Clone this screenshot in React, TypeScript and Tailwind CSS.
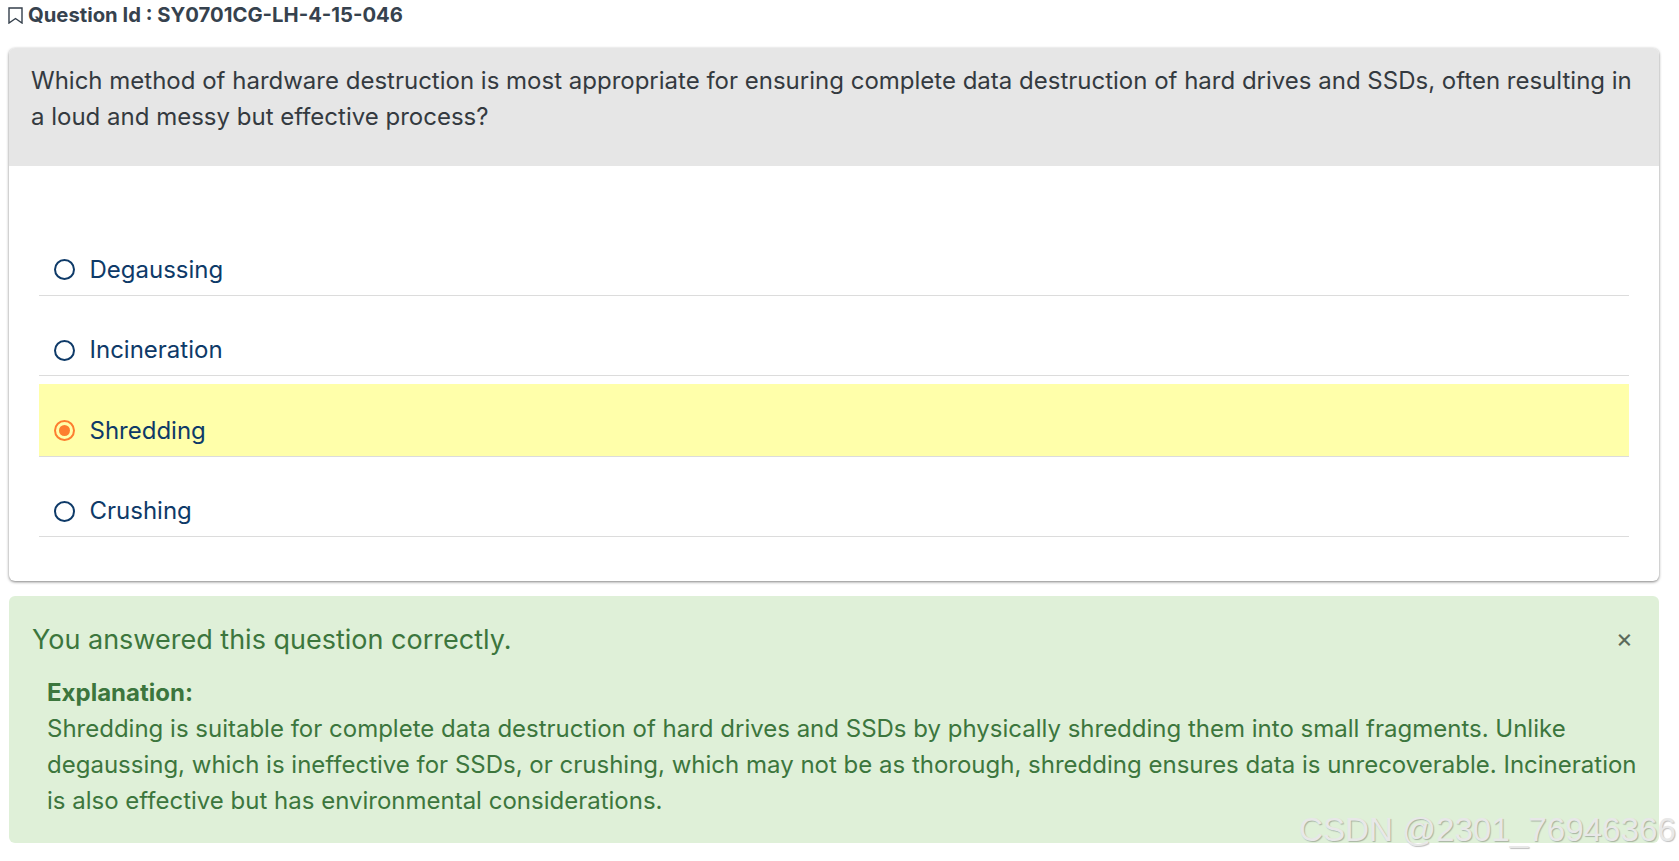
const options = [
  { label: "Degaussing", selected: false },
  { label: "Incineration", selected: false },
  { label: "Shredding", selected: true },
  { label: "Crushing", selected: false },
];

function Radio({ selected }: { selected: boolean }) {
  return (
    <span
      className={`flex h-[21px] w-[21px] shrink-0 items-center justify-center rounded-full border-2 ${
        selected ? "border-[#fd7e2f]" : "border-[#0e3a68]"
      }`}
    >
      {selected && <span className="h-[11px] w-[11px] rounded-full bg-[#fd7e2f]" />}
    </span>
  );
}

export default function App() {
  return (
    <div className="relative h-[861px] w-[1679px] overflow-hidden bg-white font-['Inter',sans-serif]">
      <div className="flex h-[30px] items-center pl-[8px] text-[20.25px] font-bold text-[#36424e]">
        <svg width="15" height="17" viewBox="0 0 15 17" fill="none" className="mr-[5px] mt-[1px]">
          <path d="M1 1h13v15l-6.5-4.5L1 16z" stroke="#343f4b" strokeWidth="1.4" strokeLinejoin="miter" />
        </svg>
        <span>Question Id : SY0701CG-LH-4-15-046</span>
      </div>

      <div className="ml-[9px] mt-[18px] w-[1650px] rounded-[6px] bg-white shadow-[0_1px_3px_rgba(0,0,0,0.5)]">
        <div className="h-[118px] rounded-t-[6px] bg-[#e6e6e6] px-[22px] pt-[15px] text-[24px] leading-[36px] text-[#343a40]">
          Which method of hardware destruction is most appropriate for ensuring complete data destruction of hard drives and SSDs, often resulting in a loud and messy but effective process?
        </div>
        <div className="flex flex-col gap-[7.5px] px-[30px] pb-[44px] pt-[56.5px]">
          {options.map((o) => (
            <div
              key={o.label}
              className={`flex h-[73px] items-end gap-[15px] border-b border-[#dcdcdc] pb-[7px] pl-[14.5px] text-[24px] leading-[36px] text-[#0e3a68] ${
                o.selected ? "bg-[#ffffaa]" : ""
              }`}
            >
              <span className="flex h-[36px] items-center"><Radio selected={o.selected} /></span>
              <span>{o.label}</span>
            </div>
          ))}
        </div>
      </div>

      <div className="relative ml-[9px] mt-[15px] h-[247px] w-[1650px] rounded-[6px] bg-[#dff0d8] pl-[23px] pr-[12px] pt-[24px] text-[#3c763d]">
        <div className="text-[27px] leading-[40px]">You answered this question correctly.</div>
        <div className="absolute right-[26px] top-[30px] text-[26px] leading-[24px] text-[#5c6a5c]">×</div>
        <div className="mt-[15px] pl-[15px] text-[24px] leading-[36px]">
          <div className="font-bold">Explanation:</div>
          <div>
            Shredding is suitable for complete data destruction of hard drives and SSDs by physically shredding them into small fragments. Unlike degaussing, which is ineffective for SSDs, or crushing, which may not be as thorough, shredding ensures data is unrecoverable. Incineration is also effective but has environmental considerations.
          </div>
        </div>
      </div>

      <div className="absolute left-[1299px] top-[812px] whitespace-nowrap font-['Liberation_Sans',sans-serif] text-[33.2px] leading-[36px] text-[#e8e8e8] [text-shadow:1px_1px_1px_rgba(0,0,0,0.25)]">
        CSDN @2301_76946366
      </div>
    </div>
  );
}
